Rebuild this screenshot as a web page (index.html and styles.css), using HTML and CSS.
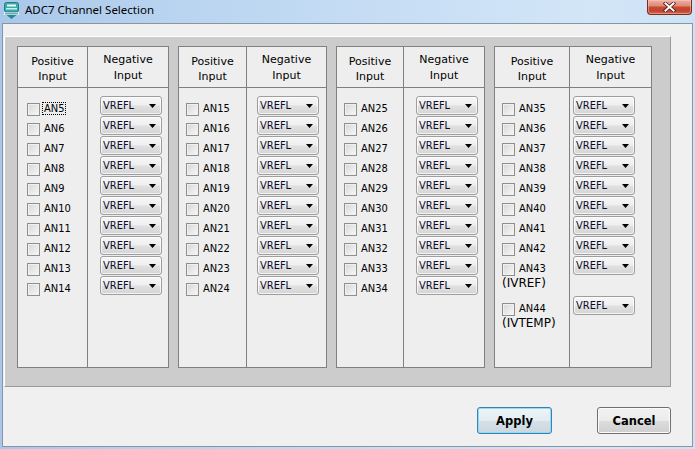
FILE: index.html
```html
<!DOCTYPE html>
<html>
<head>
<meta charset="utf-8">
<title>ADC7 Channel Selection</title>
<link rel="stylesheet" href="styles.css">
</head>
<body>
<div class="window">
  <div class="titlebar">
    <svg class="app-icon" width="15" height="17" viewBox="0 0 15 17">
      <rect x="0.5" y="0.5" width="14" height="9.5" rx="2" fill="#3ea9ab" stroke="#1d7f86"/>
      <rect x="3" y="2.5" width="9" height="2" fill="#e9fbfb"/>
      <rect x="2" y="6" width="11" height="1.5" fill="#c9eeee"/>
      <rect x="0" y="10.5" width="15" height="2.5" fill="#eef8f8"/>
      <rect x="1" y="11.3" width="13" height="1" fill="#2b8d93"/>
      <path d="M2.5 13h10l-5 4z" fill="#1e8d93"/>
    </svg>
    <span class="title">ADC7 Channel Selection</span>
    <div class="close">
      <svg width="13" height="10" viewBox="0 0 13 10">
        <path d="M2.5 1.5l8 7M10.5 1.5l-8 7" stroke="#4a1a12" stroke-width="3.6" stroke-linecap="square"/>
        <path d="M2.5 1.5l8 7M10.5 1.5l-8 7" stroke="#ffffff" stroke-width="2" stroke-linecap="square"/>
      </svg>
    </div>
  </div>

  <div class="client">
    <div class="channels">

      <div class="panel p1">
        <div class="head">
          <div class="hcell pos">Positive<br>Input</div>
          <div class="hcell neg">Negative<br>Input</div>
        </div>
        <div class="body">
          <div class="col pos">
            <div class="cb"><span class="box"></span><span class="lbl focus">AN5</span></div>
            <div class="cb"><span class="box"></span><span class="lbl">AN6</span></div>
            <div class="cb"><span class="box"></span><span class="lbl">AN7</span></div>
            <div class="cb"><span class="box"></span><span class="lbl">AN8</span></div>
            <div class="cb"><span class="box"></span><span class="lbl">AN9</span></div>
            <div class="cb"><span class="box"></span><span class="lbl">AN10</span></div>
            <div class="cb"><span class="box"></span><span class="lbl">AN11</span></div>
            <div class="cb"><span class="box"></span><span class="lbl">AN12</span></div>
            <div class="cb"><span class="box"></span><span class="lbl">AN13</span></div>
            <div class="cb"><span class="box"></span><span class="lbl">AN14</span></div>
          </div>
          <div class="col neg">
            <div class="combo"><span>VREFL</span><i class="arrow"></i></div>
            <div class="combo"><span>VREFL</span><i class="arrow"></i></div>
            <div class="combo"><span>VREFL</span><i class="arrow"></i></div>
            <div class="combo"><span>VREFL</span><i class="arrow"></i></div>
            <div class="combo"><span>VREFL</span><i class="arrow"></i></div>
            <div class="combo"><span>VREFL</span><i class="arrow"></i></div>
            <div class="combo"><span>VREFL</span><i class="arrow"></i></div>
            <div class="combo"><span>VREFL</span><i class="arrow"></i></div>
            <div class="combo"><span>VREFL</span><i class="arrow"></i></div>
            <div class="combo"><span>VREFL</span><i class="arrow"></i></div>
          </div>
        </div>
      </div>

      <div class="panel p2">
        <div class="head">
          <div class="hcell pos">Positive<br>Input</div>
          <div class="hcell neg">Negative<br>Input</div>
        </div>
        <div class="body">
          <div class="col pos">
            <div class="cb"><span class="box"></span><span class="lbl">AN15</span></div>
            <div class="cb"><span class="box"></span><span class="lbl">AN16</span></div>
            <div class="cb"><span class="box"></span><span class="lbl">AN17</span></div>
            <div class="cb"><span class="box"></span><span class="lbl">AN18</span></div>
            <div class="cb"><span class="box"></span><span class="lbl">AN19</span></div>
            <div class="cb"><span class="box"></span><span class="lbl">AN20</span></div>
            <div class="cb"><span class="box"></span><span class="lbl">AN21</span></div>
            <div class="cb"><span class="box"></span><span class="lbl">AN22</span></div>
            <div class="cb"><span class="box"></span><span class="lbl">AN23</span></div>
            <div class="cb"><span class="box"></span><span class="lbl">AN24</span></div>
          </div>
          <div class="col neg">
            <div class="combo"><span>VREFL</span><i class="arrow"></i></div>
            <div class="combo"><span>VREFL</span><i class="arrow"></i></div>
            <div class="combo"><span>VREFL</span><i class="arrow"></i></div>
            <div class="combo"><span>VREFL</span><i class="arrow"></i></div>
            <div class="combo"><span>VREFL</span><i class="arrow"></i></div>
            <div class="combo"><span>VREFL</span><i class="arrow"></i></div>
            <div class="combo"><span>VREFL</span><i class="arrow"></i></div>
            <div class="combo"><span>VREFL</span><i class="arrow"></i></div>
            <div class="combo"><span>VREFL</span><i class="arrow"></i></div>
            <div class="combo"><span>VREFL</span><i class="arrow"></i></div>
          </div>
        </div>
      </div>

      <div class="panel p3">
        <div class="head">
          <div class="hcell pos">Positive<br>Input</div>
          <div class="hcell neg">Negative<br>Input</div>
        </div>
        <div class="body">
          <div class="col pos">
            <div class="cb"><span class="box"></span><span class="lbl">AN25</span></div>
            <div class="cb"><span class="box"></span><span class="lbl">AN26</span></div>
            <div class="cb"><span class="box"></span><span class="lbl">AN27</span></div>
            <div class="cb"><span class="box"></span><span class="lbl">AN28</span></div>
            <div class="cb"><span class="box"></span><span class="lbl">AN29</span></div>
            <div class="cb"><span class="box"></span><span class="lbl">AN30</span></div>
            <div class="cb"><span class="box"></span><span class="lbl">AN31</span></div>
            <div class="cb"><span class="box"></span><span class="lbl">AN32</span></div>
            <div class="cb"><span class="box"></span><span class="lbl">AN33</span></div>
            <div class="cb"><span class="box"></span><span class="lbl">AN34</span></div>
          </div>
          <div class="col neg">
            <div class="combo"><span>VREFL</span><i class="arrow"></i></div>
            <div class="combo"><span>VREFL</span><i class="arrow"></i></div>
            <div class="combo"><span>VREFL</span><i class="arrow"></i></div>
            <div class="combo"><span>VREFL</span><i class="arrow"></i></div>
            <div class="combo"><span>VREFL</span><i class="arrow"></i></div>
            <div class="combo"><span>VREFL</span><i class="arrow"></i></div>
            <div class="combo"><span>VREFL</span><i class="arrow"></i></div>
            <div class="combo"><span>VREFL</span><i class="arrow"></i></div>
            <div class="combo"><span>VREFL</span><i class="arrow"></i></div>
            <div class="combo"><span>VREFL</span><i class="arrow"></i></div>
          </div>
        </div>
      </div>

      <div class="panel p4">
        <div class="head">
          <div class="hcell pos">Positive<br>Input</div>
          <div class="hcell neg">Negative<br>Input</div>
        </div>
        <div class="body">
          <div class="col pos">
            <div class="cb"><span class="box"></span><span class="lbl">AN35</span></div>
            <div class="cb"><span class="box"></span><span class="lbl">AN36</span></div>
            <div class="cb"><span class="box"></span><span class="lbl">AN37</span></div>
            <div class="cb"><span class="box"></span><span class="lbl">AN38</span></div>
            <div class="cb"><span class="box"></span><span class="lbl">AN39</span></div>
            <div class="cb"><span class="box"></span><span class="lbl">AN40</span></div>
            <div class="cb"><span class="box"></span><span class="lbl">AN41</span></div>
            <div class="cb"><span class="box"></span><span class="lbl">AN42</span></div>
            <div class="cb-multi">
              <div class="cb"><span class="box"></span><span class="lbl">AN43</span></div>
              <div class="sub">(IVREF)</div>
            </div>
            <div class="cb-multi">
              <div class="cb"><span class="box"></span><span class="lbl">AN44</span></div>
              <div class="sub">(IVTEMP)</div>
            </div>
          </div>
          <div class="col neg">
            <div class="combo"><span>VREFL</span><i class="arrow"></i></div>
            <div class="combo"><span>VREFL</span><i class="arrow"></i></div>
            <div class="combo"><span>VREFL</span><i class="arrow"></i></div>
            <div class="combo"><span>VREFL</span><i class="arrow"></i></div>
            <div class="combo"><span>VREFL</span><i class="arrow"></i></div>
            <div class="combo"><span>VREFL</span><i class="arrow"></i></div>
            <div class="combo"><span>VREFL</span><i class="arrow"></i></div>
            <div class="combo"><span>VREFL</span><i class="arrow"></i></div>
            <div class="combo tall"><span>VREFL</span><i class="arrow"></i></div>
            <div class="combo"><span>VREFL</span><i class="arrow"></i></div>
          </div>
        </div>
      </div>

    </div>

    <div class="buttons">
      <button class="btn default">Apply</button>
      <button class="btn">Cancel</button>
    </div>
  </div>
</div>
</body>
</html>
```

FILE: styles.css
```css
html, body {
  margin: 0;
  padding: 0;
  background: #c8def4;
}

.window {
  width: 695px;
  height: 449px;
  overflow: hidden;
  display: flex;
  flex-direction: column;
  background: linear-gradient(to right, #a9c7e9 0%, #b9d4f0 25%, #c6ddf4 55%, #d3e6f8 85%, #cde2f6 100%);
  font-family: "DejaVu Sans", sans-serif;
  color: #000;
}

/* ---------- title bar ---------- */
.titlebar {
  height: 23px;
  flex: none;
  display: flex;
  align-items: flex-start;
}

.app-icon {
  margin: 2px 0 0 4px;
  flex: none;
}

.title {
  margin-left: 6px;
  font-family: "Noto Sans", "Open Sans", sans-serif;
  font-size: 11.5px;
  line-height: 19px;
  color: #000;
}

.close {
  margin-left: auto;
  margin-right: 3px;
  width: 45px;
  height: 15px;
  box-sizing: border-box;
  border: 1px solid #7a2a1e;
  border-top: none;
  border-radius: 0 0 4px 4px;
  background: linear-gradient(#eeb0a3 0%, #e08b79 40%, #c94a33 52%, #c24330 75%, #d2634a 100%);
  box-shadow: inset 0 0 0 1px rgba(255, 210, 200, 0.45);
  display: flex;
  align-items: center;
  justify-content: center;
}

/* ---------- client ---------- */
.client {
  margin: 0 2px 2px 2px;
  height: 424px;
  box-sizing: border-box;
  border: 1px solid #8995a3;
  background: #f0f0f0;
}

.channels {
  margin: 12px 21px 0 1px;
  height: 351px;
  box-sizing: border-box;
  background: #cccccc;
  border: 1px solid;
  border-color: #ffffff #9a9a9a #9a9a9a #ffffff;
  padding: 9px 0 18px 12px;
  display: flex;
  gap: 9px;
}

.panel {
  background: #eeeeee;
  border: 1px solid #808080;
  box-sizing: border-box;
  display: flex;
  flex-direction: column;
}

.p1 { width: 152px; }
.p2 { width: 149px; }
.p3 { width: 149px; }
.p4 { width: 158px; }

.pos {
  box-sizing: border-box;
  border-right: 1px solid #808080;
  flex: none;
}
.neg { flex: 1; }

.p1 .pos { width: 70px; }
.p2 .pos { width: 68px; }
.p3 .pos { width: 67px; }
.p4 .pos { width: 75px; }

.head {
  height: 41px;
  flex: none;
  display: flex;
  box-sizing: border-box;
  border-bottom: 1px solid #808080;
}

.hcell {
  text-align: center;
  font-size: 11px;
  line-height: 15px;
  padding-top: 7px;
  box-sizing: border-box;
}
.hcell.neg {
  padding-top: 5px;
  line-height: 16px;
}

.body {
  flex: 1;
  display: flex;
}

.col.pos { padding-top: 10px; }
.col.neg { padding-top: 8px; }

.p1 .col.pos { padding-left: 9px; }
.p2 .col.pos,
.p3 .col.pos,
.p4 .col.pos { padding-left: 7px; }

.p1 .col.neg { padding-left: 12px; }
.p2 .col.neg { padding-left: 10px; }
.p3 .col.neg { padding-left: 12px; }
.p4 .col.neg { padding-left: 3px; }

/* ---------- checkboxes ---------- */
.cb {
  height: 20px;
  display: flex;
  align-items: center;
  font-size: 11px;
  font-stretch: condensed;
}

.box {
  width: 13px;
  height: 13px;
  flex: none;
  box-sizing: border-box;
  margin: 2px 4px 0 0;
  border: 1px solid #8e8f8f;
  background: linear-gradient(135deg, #d4d4d4 0%, #e6e6e6 45%, #f8f8f8 100%);
  box-shadow: inset 0 0 0 1px #f0f0f0;
}

.lbl {
  line-height: 11px;
}

.focus {
  outline: 1px dotted #000;
  padding: 0 1px;
  margin-left: -1px;
}

.cb-multi {
  height: 40px;
}

.sub {
  font-size: 12px;
  line-height: 13px;
  margin-top: -1px;
}

/* ---------- combos ---------- */
.combo {
  width: 62px;
  height: 19px;
  margin-bottom: 1px;
  box-sizing: border-box;
  border: 1px solid #9e9e9e;
  border-radius: 3px;
  background: linear-gradient(#f7f7f7 0%, #efefef 45%, #e0e0e0 55%, #d4d4d4 100%);
  box-shadow: inset 0 0 0 1px rgba(255, 255, 255, 0.7);
  display: flex;
  align-items: center;
  justify-content: space-between;
  padding: 0 5px 0 2px;
  font-size: 11px;
  font-stretch: condensed;
  color: #0b0b2a;
}

.combo.tall {
  margin-bottom: 21px;
}

.arrow {
  width: 7px;
  height: 4px;
  background: #000;
  clip-path: polygon(0 0, 100% 0, 50% 100%);
  margin-top: 1px;
}

/* ---------- buttons ---------- */
.buttons {
  display: flex;
  justify-content: flex-end;
  gap: 45px;
  padding: 20px 21px 0 0;
}

.btn {
  height: 27px;
  box-sizing: border-box;
  padding: 0;
  font-family: "DejaVu Sans", sans-serif;
  font-weight: bold;
  font-size: 11.5px;
  color: #000;
  border: 1px solid #707070;
  border-radius: 3px;
  background: linear-gradient(#f2f2f2 0%, #ebebeb 50%, #dddddd 51%, #cfcfcf 100%);
  box-shadow: inset 0 0 0 1px #fbfbfb;
  width: 74px;
}

.btn.default {
  width: 75px;
  border-color: #3c7fb1;
  background: linear-gradient(#eef4f8 0%, #e4ecf1 50%, #d5e0e7 51%, #cbd7df 100%);
  box-shadow: inset 0 0 0 1px #8fdcf8;
}
```
